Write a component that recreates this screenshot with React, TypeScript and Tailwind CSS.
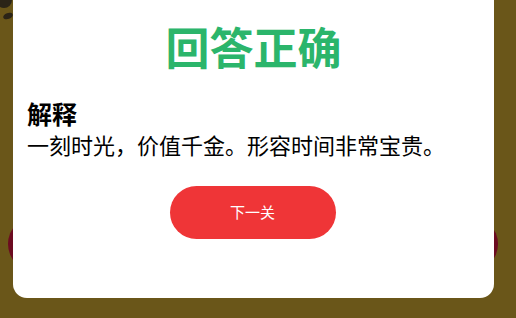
import React from "react";

const Decor = () => (
  <>
    {/* scraps of the game board showing behind the dialog */}
    <div className="absolute -left-[4px] -top-[8px] h-[16px] w-[16px] rounded-full bg-[#2b2417]" />
    <div className="absolute left-[3px] top-[13px] h-[6px] w-[10px] rotate-[-20deg] rounded-[50%] bg-[#2b2417]" />
    <div className="absolute left-[8px] top-[216px] h-[56px] w-[56px] rounded-full bg-[#6c0b20]" />
    <div className="absolute left-[442px] top-[216px] h-[56px] w-[56px] rounded-full bg-[#6c0b20]" />
  </>
);

export default function App() {
  return (
    <div
      className="relative h-[318px] w-[516px] overflow-hidden bg-[#6a5619]"
      style={{ fontFamily: '"Noto Sans CJK SC", "Noto Sans", sans-serif' }}
    >
      <Decor />
      <div className="relative ml-[13px] flex h-[298px] w-[481px] flex-col rounded-b-[14px] bg-white px-[14px]">
        <h1 className="mt-[18px] text-center text-[44px] font-bold leading-[56px] text-[#2bb56b]">
          回答正确
        </h1>
        <h2 className="mt-[24px] text-[25px] font-bold leading-[30px] text-black">解释</h2>
        <p className="mt-[1px] text-[22px] leading-[30px] text-black">
          一刻时光，价值千金。形容时间非常宝贵。
        </p>
        <div className="mt-[27px] flex justify-center">
          <button className="ml-[-2px] h-[53px] w-[166px] rounded-full bg-[#ef3537] text-[15px] text-white">
            下一关
          </button>
        </div>
      </div>
    </div>
  );
}
